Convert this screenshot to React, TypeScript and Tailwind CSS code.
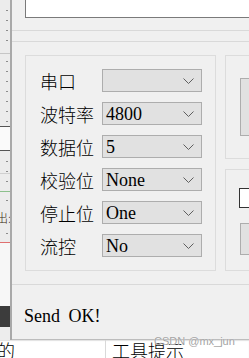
import React from "react";

const cjk = "font-['Noto_Sans_CJK_SC',sans-serif] font-light";
const serif = "font-['Liberation_Serif','Noto_Sans_CJK_SC',serif]";

function Chevron() {
  return (
    <svg width="11" height="6" viewBox="0 0 11 6" className="shrink-0">
      <polyline points="0.5,0.5 5.5,5.5 10.5,0.5" fill="none" stroke="#5f5f5f" strokeWidth="1" />
    </svg>
  );
}

function Combo({ value }: { value: string }) {
  return (
    <div className="flex h-[23px] w-[100px] shrink-0 items-center justify-between border border-[#adadad] bg-[#e1e1e1] pl-[3px] pr-[7px]">
      <span className={`${serif} text-[18px] leading-[18px] text-black`}>{value}</span>
      <Chevron />
    </div>
  );
}

function Row({ label, value }: { label: string; value: string }) {
  return (
    <div className="flex h-[23px] items-center">
      <div className={`${cjk} w-[62px] shrink-0 text-[18px] leading-[18px] text-black`}>{label}</div>
      <Combo value={value} />
    </div>
  );
}

function DotRow({ h }: { h: string }) {
  return (
    <div className={`flex ${h} justify-end pr-[2px]`}>
      <div className="h-[1px] w-[2px] bg-[#8c8c8c]" />
    </div>
  );
}

function LeftStrip() {
  return (
    <div className="flex h-[340px] w-[10px] shrink-0 flex-col bg-[#ececec]">
      <div className="h-[10px]" />
      <DotRow h="h-[10px]" />
      <DotRow h="h-[10px]" />
      <DotRow h="h-[10px]" />
      <DotRow h="h-[10px]" />
      <div className="h-[3px]" />
      <div className="h-[1px] bg-[#c6c6c6]" />
      <div className="h-[7px]" />
      <DotRow h="h-[10px]" />
      <DotRow h="h-[10px]" />
      <DotRow h="h-[10px]" />
      <DotRow h="h-[10px]" />
      <DotRow h="h-[10px]" />
      <DotRow h="h-[10px]" />
      <DotRow h="h-[5px]" />
      <div className="h-[1px] bg-[#555555]" />
      <div className="h-[23px] bg-[#fafafa]" />
      <div className="h-[1px] bg-[#555555]" />
      <div className="h-[10px]" />
      <DotRow h="h-[10px]" />
      <DotRow h="h-[2px]" />
      <div className="h-[1px] bg-[#d0d0d0]" />
      <div className="h-[7px]" />
      <DotRow h="h-[10px]" />
      <div className="h-[1px] bg-[#8cc08c]" />
      <div className="h-[8px]" />
      <DotRow h="h-[10px]" />
      <div className="flex h-[15px] items-center overflow-hidden">
        <span className={`${cjk} -ml-[4px] text-[12px] leading-[12px] text-[#3a2a10]`}>出:</span>
      </div>
      <div className="h-[8px]" />
      <DotRow h="h-[9px]" />
      <div className="h-[1px] bg-[#e07070]" />
      <div className="h-[63px] bg-[#f7f7f7]" />
      <div className="h-[21px] bg-[#3c3c3c]" />
      <div className="h-[13px] bg-[#ededed]" />
    </div>
  );
}

export default function App() {
  return (
    <div className="relative flex h-[358px] w-[249px] flex-col overflow-hidden bg-white">
      <div className="flex h-[340px] shrink-0">
        <LeftStrip />
        <div className="w-[2px] shrink-0 bg-[#a9a9a9]" />
        <div className="flex w-[237px] shrink-0 flex-col overflow-hidden border-b border-[#bdbdbd] bg-[#f0f0f0]">
          <div className="flex h-[18px] shrink-0 pl-[13px]">
            <div className="h-[18px] flex-1 border-b border-l border-[#7a7a7a] bg-white" />
          </div>
          <div className="h-[12px] shrink-0" />
          <div className="h-[1px] shrink-0 bg-[#d9d9d9]" />
          <div className="h-[10px] shrink-0" />
          <div className="h-[1px] shrink-0 bg-[#d9d9d9]" />
          <div className="h-[13px] shrink-0" />
          <div className="flex h-[216px] shrink-0 pl-[13px]">
            <div className="flex h-[216px] w-[191px] shrink-0 flex-col gap-[10px] border border-[#dcdcdc] pl-[14px] pt-[13px]">
              <Row label="串口" value="" />
              <Row label="波特率" value="4800" />
              <Row label="数据位" value="5" />
              <Row label="校验位" value="None" />
              <Row label="停止位" value="One" />
              <Row label="流控" value="No" />
            </div>
            <div className="ml-[9px] flex w-[60px] shrink-0 flex-col">
              <div className="h-[104px] border border-[#dcdcdc] pl-[14px] pt-[22px]">
                <div className="h-[58px] w-[60px] border border-[#adadad] bg-[#e1e1e1]" />
              </div>
              <div className="mt-[10px] h-[102px] border border-[#dcdcdc] pl-[13px] pt-[18px]">
                <div className="h-[20px] w-[20px] border border-[#333333] bg-white" />
                <div className="ml-[1px] mt-[15px] h-[32px] w-[60px] border border-[#adadad] bg-[#e1e1e1]" />
              </div>
            </div>
          </div>
          <div className="h-[13px] shrink-0" />
          <div className="h-[1px] shrink-0 bg-[#d9d9d9]" />
          <div className="pl-[12px] pt-[22px]">
            <div className={`${serif} text-[18px] leading-[18px] text-black [word-spacing:4px]`}>Send OK!</div>
          </div>
        </div>
      </div>
      <div className="flex h-[18px] shrink-0 bg-white shadow-[inset_0_1px_1px_#e2e2e2]">
        <div className="w-[105px] shrink-0 overflow-hidden pt-[1px]">
          <span className={`${cjk} -ml-[3px] block text-[18px] leading-[18px] text-black`}>的</span>
        </div>
        <div className="w-[1px] shrink-0 bg-[#d9d9d9]" />
        <div className="pl-[6px] pt-[1px]">
          <span className={`${cjk} block text-[18px] leading-[18px] text-black`}>工具提示</span>
        </div>
      </div>
      <div className="pointer-events-none absolute left-[154px] top-[336px] font-['Liberation_Sans',sans-serif] text-[11px] leading-[11px] text-[#a3a3a3] [text-shadow:0_0_1px_#ffffff]">
        CSDN @mx_jun
      </div>
    </div>
  );
}
